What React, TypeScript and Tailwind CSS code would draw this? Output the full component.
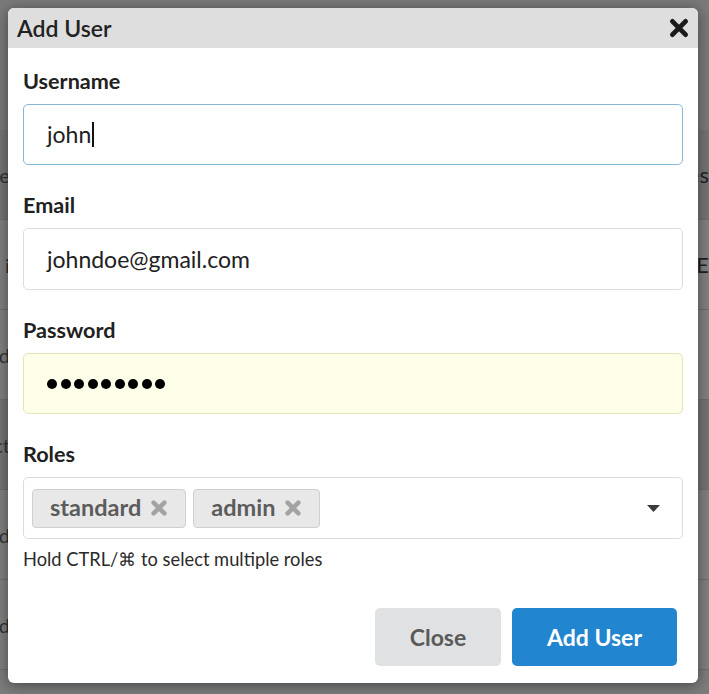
import React from 'react';

const bgRows = [
  { left: 'e', right: 'es', dark: true },
  { left: 'i', right: 'SE', dark: false },
  { left: 'd', right: '', dark: false },
  { left: 'ct', right: '', dark: true },
  { left: 'd', right: '', dark: false },
  { left: 'd', right: '', dark: false },
];

const XIcon = ({ className, size, weight }: { className: string; size: number; weight: number }) => (
  <svg width={size} height={size} viewBox="0 0 20 20" className={className}>
    <path d="M4 4 L16 16 M16 4 L4 16" stroke="currentColor" strokeWidth={weight} strokeLinecap="round" />
  </svg>
);

const Field = ({ label, children, first }: { label: string; children: React.ReactNode; first?: boolean }) => (
  <div className={first ? '' : 'mt-[29px]'}>
    <div className="h-[24px] text-[21.6px] leading-[22px] font-bold text-[#212121]">{label}</div>
    <div className="mt-[10px]">{children}</div>
  </div>
);

const RoleTag = ({ name }: { name: string }) => (
  <div className="flex h-[39px] items-center gap-[9px] rounded-[4px] border border-[#cfcfcf] bg-[#e8e8e8] pl-[17px] pr-[17px]">
    <span className="text-[23.5px] font-bold text-[#5c5c5c]">{name}</span>
    <XIcon size={18} weight={5} className="text-[#a3a3a3]" />
  </div>
);

const App = () => {
  return (
    <div className="relative h-[694px] w-[709px] overflow-hidden bg-[#7c7c7c] font-['Lato',sans-serif]">
      {/* dimmed page behind the modal */}
      <div className="h-[130px] bg-[#7a7a7a]" />
      <div className="flex flex-col">
        {bgRows.map((row, i) => (
          <div
            key={i}
            className={`flex h-[90px] border-b border-[#6e6e6e] ${row.dark ? 'bg-[#747474]' : 'bg-[#808080]'}`}
          >
            <div className="flex w-[10px] items-center justify-end overflow-hidden text-[20px] text-[#333]">{row.left}</div>
            <div className="w-[141px] border-r border-[#727272]" />
            <div className="w-[199px] border-r border-[#727272]" />
            <div className="w-[141px] border-r border-[#727272]" />
            <div className="w-[199px]" />
            <div className="flex flex-1 items-center pl-[4px] text-[22px] text-[#222]">{row.right}</div>
          </div>
        ))}
      </div>

      {/* modal */}
      <div className="absolute left-[8px] top-[8px] flex h-[675px] w-[690px] flex-col overflow-hidden rounded-[6px] bg-white shadow-[0_2px_14px_rgba(0,0,0,0.45)]">
        <div className="flex h-[40px] items-center justify-between bg-[#dedede] pl-[9px] pr-[8px]">
          <span className="text-[23px] font-semibold text-[#222]">Add User</span>
          <XIcon size={22} weight={4.4} className="text-[#1a1a1a]" />
        </div>

        <div className="flex flex-1 flex-col px-[15px] pt-[22px]">
          <Field label="Username" first>
            <div className="flex h-[61px] items-center rounded-[5px] border border-[#85b7d9] pl-[23px] text-[23px] text-[#212121]">
              <span>john</span>
              <span className="ml-[1px] h-[25px] w-[2px] bg-[#111]" />
            </div>
          </Field>

          <Field label="Email">
            <div className="flex h-[62px] items-center rounded-[5px] border border-[#dcdcdd] pl-[23px] text-[23px] text-[#212121]">
              johndoe@gmail.com
            </div>
          </Field>

          <Field label="Password">
            <div className="flex h-[61px] items-center gap-[3.5px] rounded-[5px] border border-[#e4e4ba] bg-[#fefee9] pl-[23px]">
              {Array.from({ length: 9 }).map((_, i) => (
                <span key={i} className="h-[10px] w-[10px] rounded-full bg-black" />
              ))}
            </div>
          </Field>

          <Field label="Roles">
            <div className="flex h-[62px] items-center justify-between rounded-[5px] border border-[#dcdcdd] pl-[8px] pr-[22px]">
              <div className="flex gap-[7px]">
                <RoleTag name="standard" />
                <RoleTag name="admin" />
              </div>
              <svg width="13" height="7" viewBox="0 0 13 7">
                <path d="M0 0 H13 L6.5 7 Z" fill="#3a3a3a" />
              </svg>
            </div>
          </Field>

          <div className="mt-[10px] text-[18.3px] leading-[20px] text-[#2a2a2a]">Hold CTRL/⌘ to select multiple roles</div>

          <div className="mt-[39px] flex justify-end gap-[11px] pr-[6px]">
            <button className="h-[58px] w-[126px] rounded-[5px] bg-[#e0e1e2] text-[23px] font-bold text-[#5a5a5a]">Close</button>
            <button className="h-[58px] w-[165px] rounded-[5px] bg-[#2185d0] text-[23px] font-bold text-white">Add User</button>
          </div>
        </div>
      </div>
    </div>
  );
};

export default App;
